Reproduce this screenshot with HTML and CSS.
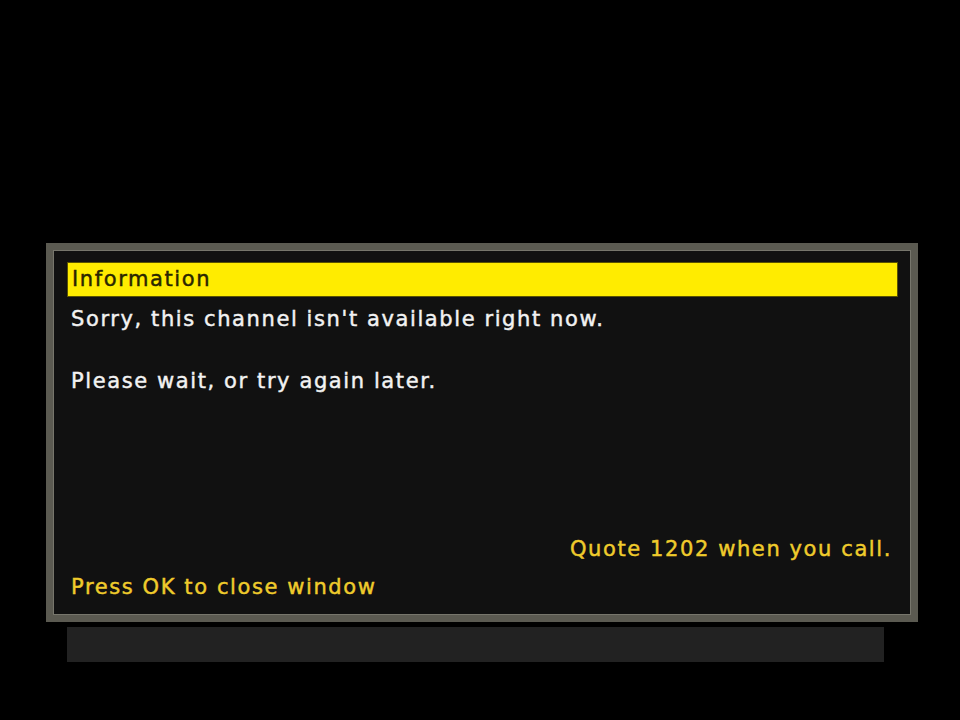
FILE: index.html
```html
<!DOCTYPE html>
<html>
    <head>
        <title>Information</title>
        <link rel="stylesheet" href="styles.css">
    </head>
    <body>
        <div class="dialog">
            <div class="title">Information</div>
            <div class="body">
                <p class="msg first">Sorry, this channel isn't available right now.</p>
                <p class="msg">Please wait, or try again later.</p>
                <p class="quote">Quote 1202 when you call.</p>
                <p class="hint">Press OK to close window</p>
            </div>
        </div>
        <div class="footer"></div>
    </body>
</html>
```

FILE: styles.css
```css
html, body {
    margin: 0;
    background: #000;
}
body {
    width: 960px;
    height: 720px;
    padding-top: 243px;
    box-sizing: border-box;
    font-family: "DejaVu Sans", sans-serif;
    font-size: 21px;
    letter-spacing: 1.6px;
    -webkit-text-stroke: 0.45px currentColor;
}
.dialog {
    margin-left: 46px;
    width: 872px;
    height: 379px;
    box-sizing: border-box;
    border: 7px solid #5b5a51;
    box-shadow: inset 0 0 0 1px #77766c;
    background: #111;
    padding: 12px 13px 0 14px;
    display: flex;
    flex-direction: column;
}
.title {
    height: 35px;
    box-sizing: border-box;
    background: #ffec00;
    border: 1px solid #5a5300;
    color: #2a2600;
    padding-left: 4px;
    line-height: 33px;
}
.body {
    flex: 1;
    display: flex;
    flex-direction: column;
    padding: 0 6px 0 4px;
}
p {
    margin: 0;
}
.msg {
    color: #f2f2f2;
    line-height: 24px;
}
.msg.first {
    margin-top: 10px;
    margin-bottom: 38px;
}
.quote {
    margin-top: auto;
    text-align: right;
    color: #efcb2c;
    line-height: 24px;
}
.hint {
    color: #efcb2c;
    line-height: 24px;
    margin-top: 14px;
    margin-bottom: 16px;
}
.footer {
    margin-top: 5px;
    margin-left: 67px;
    width: 817px;
    height: 35px;
    background: #222;
}
```
